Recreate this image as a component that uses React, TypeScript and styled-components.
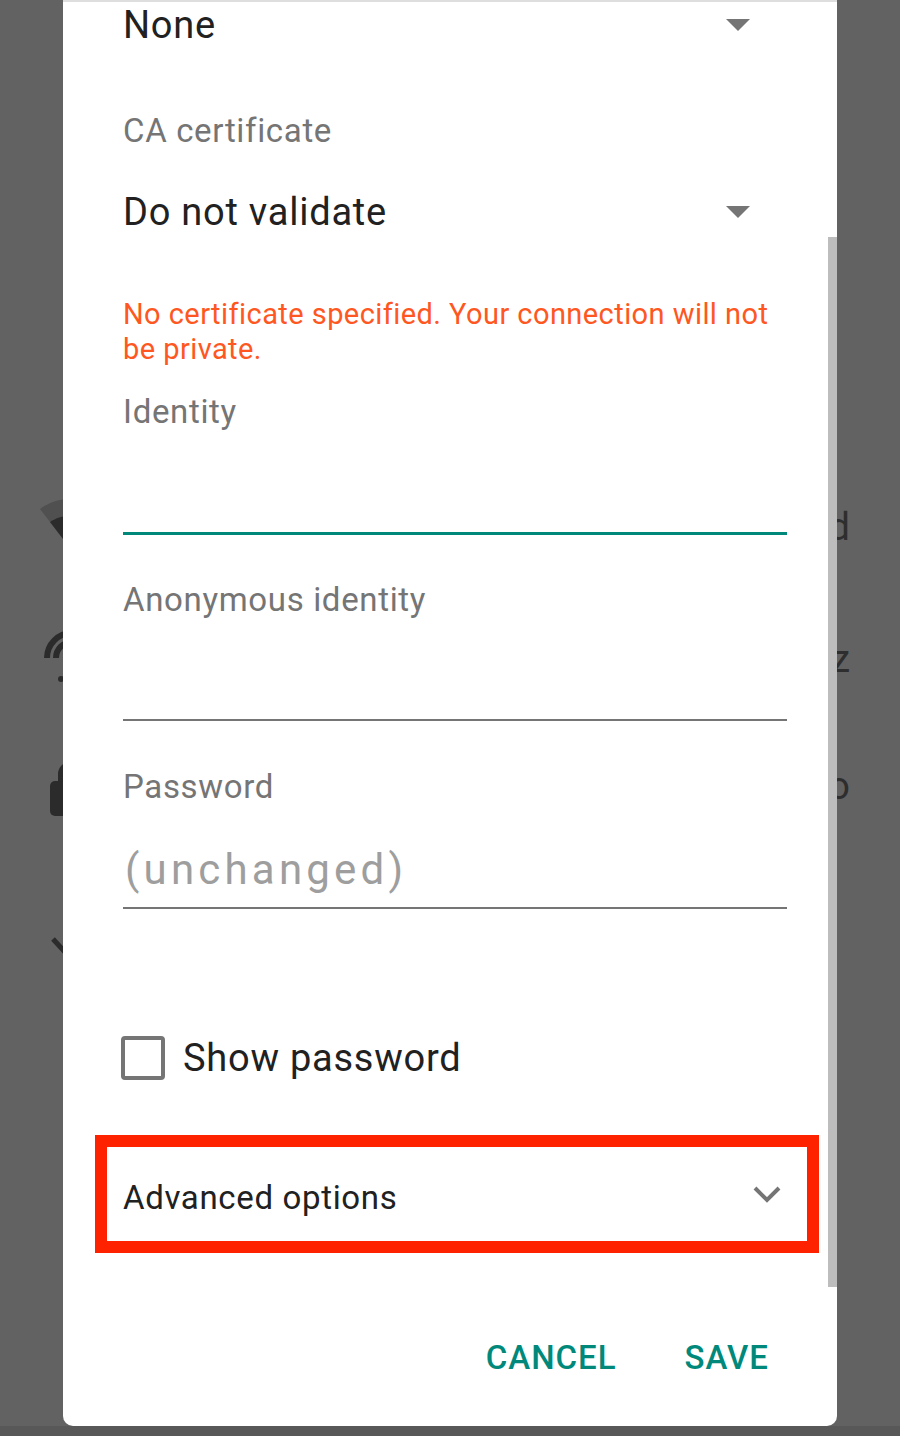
import React from "react";
import styled, { createGlobalStyle } from "styled-components";

const Global = createGlobalStyle`
  html, body { margin: 0; padding: 0; background: #626262; }
  body { font-family: Roboto, "Noto Sans", Arial, sans-serif; }
  #root { width: 900px; height: 1436px; }
`;

const Screen = styled.div`
  position: relative;
  width: 900px;
  height: 1436px;
  overflow: hidden;
  background: #626262;
  display: flex;
  flex-direction: column;
`;

const Backdrop = styled.div`
  flex: 1;
  display: flex;
  flex-direction: column;
  padding-top: 460px;
`;

const BgRow = styled.div<{ $h: number }>`
  height: ${(p) => p.$h}px;
  display: flex;
  align-items: center;
  justify-content: space-between;
  padding: 0 50px 0 38px;
`;

const BgText = styled.span`
  font-size: 38px;
  color: #2e2e2e;
`;

const NavStrip = styled.div`
  height: 10px;
  background: #585858;
`;

const Dialog = styled.div`
  position: absolute;
  left: 63px;
  top: 0;
  width: 774px;
  height: 1426px;
  box-sizing: border-box;
  background: #ffffff;
  border-top: 2px solid #dedede;
  border-radius: 0 0 10px 10px;
  padding: 0 50px 39px 60px;
  display: flex;
  flex-direction: column;
`;

const ScrollThumb = styled.div`
  position: absolute;
  right: 0;
  top: 235px;
  width: 9px;
  height: 1050px;
  background: #bdbdbd;
`;

const SpinnerRow = styled.div<{ $h: number; $mt: number }>`
  height: ${(p) => p.$h}px;
  margin-top: ${(p) => p.$mt}px;
  display: flex;
  align-items: center;
  justify-content: space-between;
  padding-right: 37px;
`;

const Value = styled.span`
  font-size: 38px;
  letter-spacing: 0.02em;
  color: #212121;
`;

const Caret = styled.span`
  width: 0;
  height: 0;
  border-left: 12px solid transparent;
  border-right: 12px solid transparent;
  border-top: 12px solid #757575;
`;

const Label = styled.div<{ $mt: number }>`
  margin-top: ${(p) => p.$mt}px;
  font-size: 33px;
  line-height: 40px;
  letter-spacing: 0.02em;
  color: #757575;
`;

const ErrorText = styled.div`
  margin-top: 60px;
  font-size: 29px;
  line-height: 35px;
  letter-spacing: 0.015em;
  color: #ff5722;
`;

const Field = styled.div<{ $h: number; $focused?: boolean }>`
  height: ${(p) => p.$h}px;
  border-bottom: ${(p) => (p.$focused ? "3px solid #00897b" : "2px solid #757575")};
  display: flex;
  align-items: flex-end;
`;

const Placeholder = styled.span`
  font-size: 42px;
  line-height: 50px;
  letter-spacing: 0.1em;
  color: #9e9e9e;
  margin-bottom: 12px;
  margin-left: 2px;
`;

const CheckRow = styled.label`
  margin-top: 119px;
  height: 60px;
  display: flex;
  align-items: center;
`;

const Box = styled.span`
  width: 44px;
  height: 44px;
  box-sizing: border-box;
  border: 4px solid #757575;
  border-radius: 4px;
  margin-left: -2px;
`;

const CheckText = styled.span`
  margin-left: 18px;
  font-size: 38px;
  letter-spacing: 0.02em;
  color: #212121;
`;

const Advanced = styled.div`
  margin: 47px -32px 0 -28px;
  height: 118px;
  box-sizing: border-box;
  border: 12px solid #ff2200;
  padding: 0 25px 0 16px;
  display: flex;
  align-items: center;
  justify-content: space-between;
`;

const AdvancedText = styled.span`
  font-size: 33px;
  letter-spacing: 0.02em;
  color: #212121;
  margin-top: 6px;
`;

const Actions = styled.div`
  margin-top: 74px;
  height: 60px;
  display: flex;
  align-items: center;
  justify-content: flex-end;
  gap: 68px;
  padding-right: 18px;
`;

const ActionButton = styled.button`
  border: none;
  background: none;
  padding: 0;
  font-family: Roboto, "Noto Sans", Arial, sans-serif;
  font-size: 33px;
  font-weight: 500;
  letter-spacing: 0.03em;
  color: #00897b;
  cursor: pointer;
`;

const Icon = styled.svg`
  width: 64px;
  height: 64px;
  flex: none;
`;

export default function App() {
  return (
    <Screen>
      <Global />
      <Backdrop>
        <BgRow $h={133}>
          <Icon viewBox="0 0 64 64">
            <path d="M32 53 L62 14 C54 8 44 4 32 4 S10 8 2 14 Z" fill="#505050" />
            <path d="M32 53 L52 27 C46 23 40 21 32 21 S18 23 12 27 Z" fill="#2b2b2b" />
          </Icon>
          <BgText>Saved</BgText>
        </BgRow>
        <BgRow $h={132}>
          <Icon viewBox="0 0 64 64">
            <path d="M9 31 A25 25 0 0 1 34 6" fill="none" stroke="#2b2b2b" strokeWidth="6" />
            <path d="M18 31 A16 16 0 0 1 34 15" fill="none" stroke="#2b2b2b" strokeWidth="6" />
            <circle cx="23" cy="52" r="3" fill="#2b2b2b" />
          </Icon>
          <BgText>5 GHz</BgText>
        </BgRow>
        <BgRow $h={122}>
          <Icon viewBox="0 0 64 64">
            <path d="M22.5 28 V20 A10 10 0 0 1 42.5 20 V28" fill="none" stroke="#2b2b2b" strokeWidth="5" />
            <rect x="12" y="27" width="40" height="35" rx="5" fill="#2b2b2b" />
          </Icon>
          <BgText>Radio</BgText>
        </BgRow>
        <BgRow $h={194}>
          <Icon viewBox="0 0 64 64">
            <path d="M15 27 L25 38 L37 26" fill="none" stroke="#2b2b2b" strokeWidth="5" />
          </Icon>
        </BgRow>
      </Backdrop>
      <NavStrip />

      <Dialog>
        <SpinnerRow $h={46} $mt={0}>
          <Value>None</Value>
          <Caret />
        </SpinnerRow>

        <Label $mt={63}>CA certificate</Label>
        <SpinnerRow $h={50} $mt={36}>
          <Value>Do not validate</Value>
          <Caret />
        </SpinnerRow>

        <ErrorText>No certificate specified. Your connection will not be private.</ErrorText>

        <Label $mt={25}>Identity</Label>
        <Field $h={100} $focused />

        <Label $mt={45}>Anonymous identity</Label>
        <Field $h={99} />

        <Label $mt={46}>Password</Label>
        <Field $h={100}>
          <Placeholder>(unchanged)</Placeholder>
        </Field>

        <CheckRow>
          <Box />
          <CheckText>Show password</CheckText>
        </CheckRow>

        <Advanced>
          <AdvancedText>Advanced options</AdvancedText>
          <svg width="30" height="20" viewBox="0 0 30 20">
            <path d="M3 4 L15 16 L27 4" fill="none" stroke="#757575" strokeWidth="4" />
          </svg>
        </Advanced>

        <Actions>
          <ActionButton>CANCEL</ActionButton>
          <ActionButton>SAVE</ActionButton>
        </Actions>

        <ScrollThumb />
      </Dialog>
    </Screen>
  );
}
